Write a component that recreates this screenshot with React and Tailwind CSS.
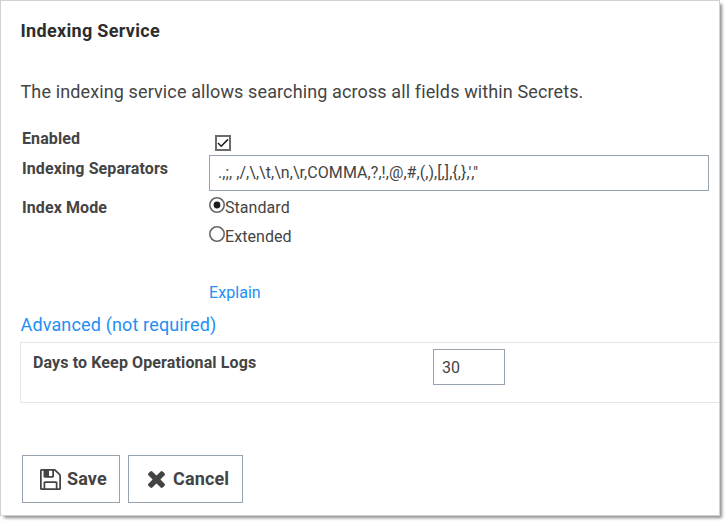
import React from "react";

function Radio({ label, checked }) {
  return (
    <label className="flex h-[29px] items-start">
      <svg width="16" height="16" viewBox="0 0 16 16" className="shrink-0">
        <circle cx="8" cy="8" r="7.2" fill="#fff" stroke="#666" strokeWidth="1.6" />
        {checked && <circle cx="8" cy="8" r="3.4" fill="#1c1c1c" />}
      </svg>
      <span className="mt-[1px] text-[16px] leading-[20px] tracking-[0.06px]">{label}</span>
    </label>
  );
}

function SaveIcon() {
  return (
    <svg width="21" height="21" viewBox="0 128 1536 1536" fill="currentColor" className="shrink-0">
      <path d="M384 1536h768v-384H384v384zm896 0h128V640q0-14-10-38.5t-20-34.5l-281-281q-10-10-34-20t-39-10v416q0 40-28 68t-68 28H352q-40 0-68-28t-28-68V256H128v1280h128v-416q0-40 28-68t68-28h832q40 0 68 28t28 68v416zM896 608V288q0-13-9.5-22.5T864 256H672q-13 0-22.5 9.5T640 288v320q0 13 9.5 22.5T672 640h192q13 0 22.5-9.5T896 608zm640 32v928q0 40-28 68t-68 28H96q-40 0-68-28t-28-68V224q0-40 28-68t68-28h928q40 0 88 20t76 48l280 280q28 28 48 76t20 88z" />
      <path d="M300 230h360v430h-360z" />
    </svg>
  );
}

function CancelIcon() {
  return (
    <svg width="17" height="17" viewBox="302 366 1188 1188" fill="currentColor" className="shrink-0">
      <path d="M1490 1322q0 40-28 68l-136 136q-28 28-68 28t-68-28l-294-294-294 294q-28 28-68 28t-68-28l-136-136q-28-28-28-68t28-68l294-294-294-294q-28-28-28-68t28-68l136-136q28-28 68-28t68 28l294 294 294-294q28-28 68-28t68 28l136 136q28 28 28 68t-28 68l-294 294 294 294q28 28 28 68z" />
    </svg>
  );
}

export default function App() {
  return (
    <div className="h-[524px] w-[728px] overflow-hidden bg-white font-[Roboto,sans-serif] text-[#444]">
      <main className="flex h-[516px] w-[720px] flex-col border border-[#d2d2d2] bg-white pl-[19px] shadow-[3px_3px_3px_-1px_#8c8c8c]">
        <h1 className="mt-[18px] pl-[0.5px] text-[18px] leading-[24px] font-bold tracking-[0.31px] text-[#2d2d2d]">Indexing Service</h1>
        <p className="mt-[37px] pl-[0.5px] text-[18px] leading-[24px] tracking-[0.12px]">
          The indexing service allows searching across all fields within Secrets.
        </p>
        <div className="mt-[22px] flex h-[29px] pl-[2px]">
          <div className="w-[187px] pt-[3px] text-[16px] leading-[20px] font-bold tracking-[0.1px]">Enabled</div>
          <svg width="16" height="16" viewBox="0 0 16 16" className="mt-[9px] ml-[6px]">
            <rect x="1" y="1" width="14" height="14" fill="#fff" stroke="#6b6b6b" strokeWidth="2" />
            <path d="M3 8l3.2 3.2L13 4.4" fill="none" stroke="#1c1c1c" strokeWidth="1.5" />
          </svg>
        </div>
        <div className="mt-px flex h-[42px] pl-[2px]">
          <div className="w-[187px] pt-[3px] text-[16px] leading-[20px] font-bold tracking-[0.1px]">Indexing Separators</div>
          <div className="-mt-px flex h-[36px] w-[500px] items-center border border-[#98a3ad] pl-2 text-[16px] tracking-[0.06px] whitespace-pre">
            {".,;, ,/,\\,\\t,\\n,\\r,COMMA,?,!,@,#,(,),[,],{,},',\""}
          </div>
        </div>
        <div className="flex h-[85px] pl-[2px]">
          <div className="w-[187px] text-[16px] leading-[20px] font-bold tracking-[0.1px]">Index Mode</div>
          <div className="-mt-px">
            <Radio label="Standard" checked />
            <Radio label="Extended" />
          </div>
        </div>
        <a className="ml-[189px] text-[16px] leading-[20px] tracking-[0.06px] text-[#1e8ff5]">Explain</a>
        <a className="mt-[10px] pl-[0.5px] text-[18px] leading-[24px] tracking-[0.15px] text-[#1e8ff5]">Advanced (not required)</a>
        <section className="mt-[5px] flex h-[61px] border border-r-0 border-[#e5e5e5] pt-[6px] pl-[12px]">
          <div className="w-[400px] pt-[4px] text-[16px] leading-[20px] font-bold tracking-[0.12px]">Days to Keep Operational Logs</div>
          <div className="flex h-[36px] w-[72px] items-center border border-[#98a3ad] pt-[2px] pl-2 text-[16px]">30</div>
        </section>
        <div className="mt-[52px] flex gap-2 pl-[2px] text-[18px] font-bold">
          <button className="flex h-[48px] w-[98px] items-center border border-[#98a3ad] pl-[17px]">
            <SaveIcon />
            <span className="ml-[6px] pb-[2px] tracking-[0.1px]">Save</span>
          </button>
          <button className="flex h-[48px] w-[115px] items-center border border-[#98a3ad] pl-[19px]">
            <CancelIcon />
            <span className="ml-[8px] pb-[2px] tracking-[0.15px]">Cancel</span>
          </button>
        </div>
      </main>
    </div>
  );
}
